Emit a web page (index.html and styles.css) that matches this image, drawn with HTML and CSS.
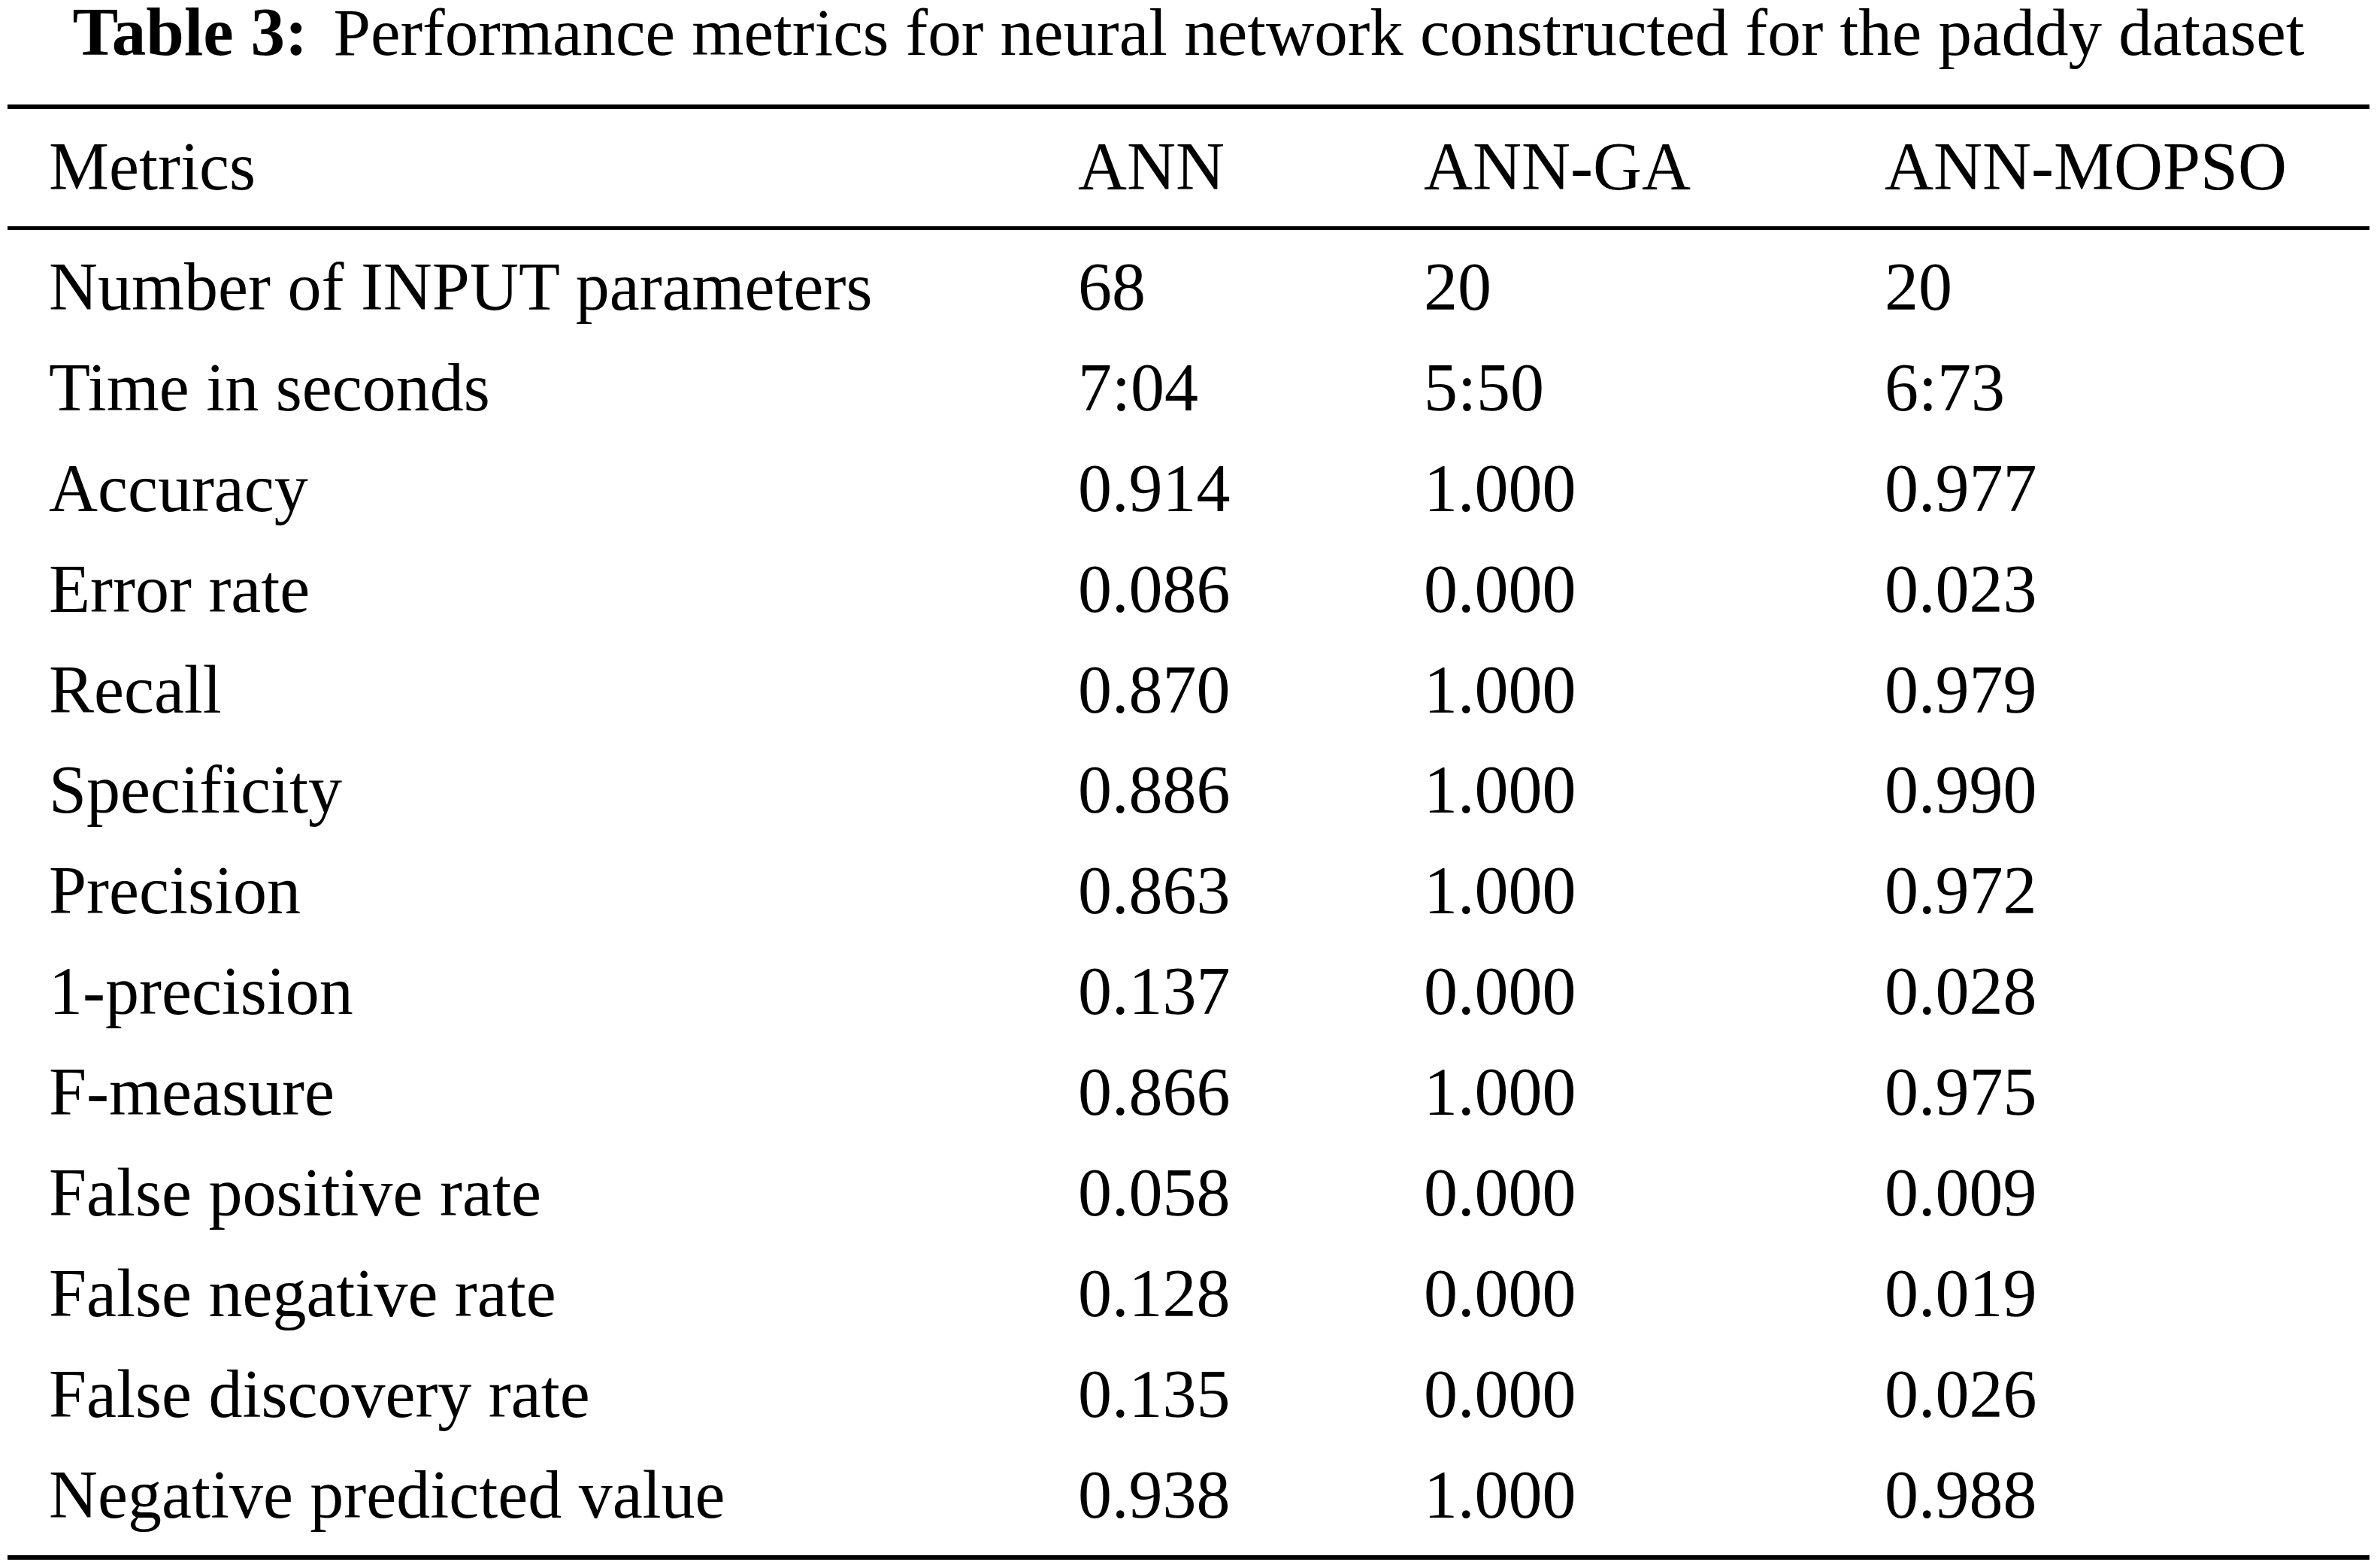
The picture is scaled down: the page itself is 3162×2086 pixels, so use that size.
FILE: index.html
```html
<!DOCTYPE html>
<html lang="en">
<head>
<meta charset="utf-8">
<title>Table 3</title>
<link rel="stylesheet" href="styles.css">
</head>
<body>
<h1 class="caption"><b class="caption-label">Table 3:</b> Performance metrics for neural network constructed for the paddy dataset</h1>
<div class="table">
  <div class="row head">
    <div class="cell">Metrics</div>
    <div class="cell">ANN</div>
    <div class="cell">ANN-GA</div>
    <div class="cell">ANN-MOPSO</div>
  </div>
  <div class="body">
    <div class="row"><div class="cell">Number of INPUT parameters</div><div class="cell">68</div><div class="cell">20</div><div class="cell">20</div></div>
    <div class="row"><div class="cell">Time in seconds</div><div class="cell">7:04</div><div class="cell">5:50</div><div class="cell">6:73</div></div>
    <div class="row"><div class="cell">Accuracy</div><div class="cell">0.914</div><div class="cell">1.000</div><div class="cell">0.977</div></div>
    <div class="row"><div class="cell">Error rate</div><div class="cell">0.086</div><div class="cell">0.000</div><div class="cell">0.023</div></div>
    <div class="row"><div class="cell">Recall</div><div class="cell">0.870</div><div class="cell">1.000</div><div class="cell">0.979</div></div>
    <div class="row"><div class="cell">Specificity</div><div class="cell">0.886</div><div class="cell">1.000</div><div class="cell">0.990</div></div>
    <div class="row"><div class="cell">Precision</div><div class="cell">0.863</div><div class="cell">1.000</div><div class="cell">0.972</div></div>
    <div class="row"><div class="cell">1-precision</div><div class="cell">0.137</div><div class="cell">0.000</div><div class="cell">0.028</div></div>
    <div class="row"><div class="cell">F-measure</div><div class="cell">0.866</div><div class="cell">1.000</div><div class="cell">0.975</div></div>
    <div class="row"><div class="cell">False positive rate</div><div class="cell">0.058</div><div class="cell">0.000</div><div class="cell">0.009</div></div>
    <div class="row"><div class="cell">False negative rate</div><div class="cell">0.128</div><div class="cell">0.000</div><div class="cell">0.019</div></div>
    <div class="row"><div class="cell">False discovery rate</div><div class="cell">0.135</div><div class="cell">0.000</div><div class="cell">0.026</div></div>
    <div class="row"><div class="cell">Negative predicted value</div><div class="cell">0.938</div><div class="cell">1.000</div><div class="cell">0.988</div></div>
  </div>
</div>
</body>
</html>
```
FILE: styles.css
```css
html, body {
  margin: 0;
  padding: 0;
  background: #ffffff;
}

body {
  width: 3162px;
  font-family: "Liberation Serif", "Times New Roman", serif;
  color: #000000;
}

.caption {
  margin: 0;
  font-size: 89px;
  font-weight: normal;
  line-height: 86px;
  text-align: center;
  white-space: nowrap;
}

.caption-label {
  font-weight: bold;
  font-size: 91px;
  margin-right: 12px;
}

.table {
  margin: 53px 10px 0;
  border-top: 6px solid #000000;
  border-bottom: 6px solid #000000;
  font-size: 90px;
}

.row {
  display: grid;
  grid-template-columns: 1424px 460px 613px 1fr;
  line-height: 133.9px;
}

.cell {
  white-space: nowrap;
}

.row > .cell:first-child {
  padding-left: 55px;
}

.head {
  padding: 10px 0 12px;
  border-bottom: 5px solid #000000;
}

.body {
  padding: 9px 0 13px;
}
```
